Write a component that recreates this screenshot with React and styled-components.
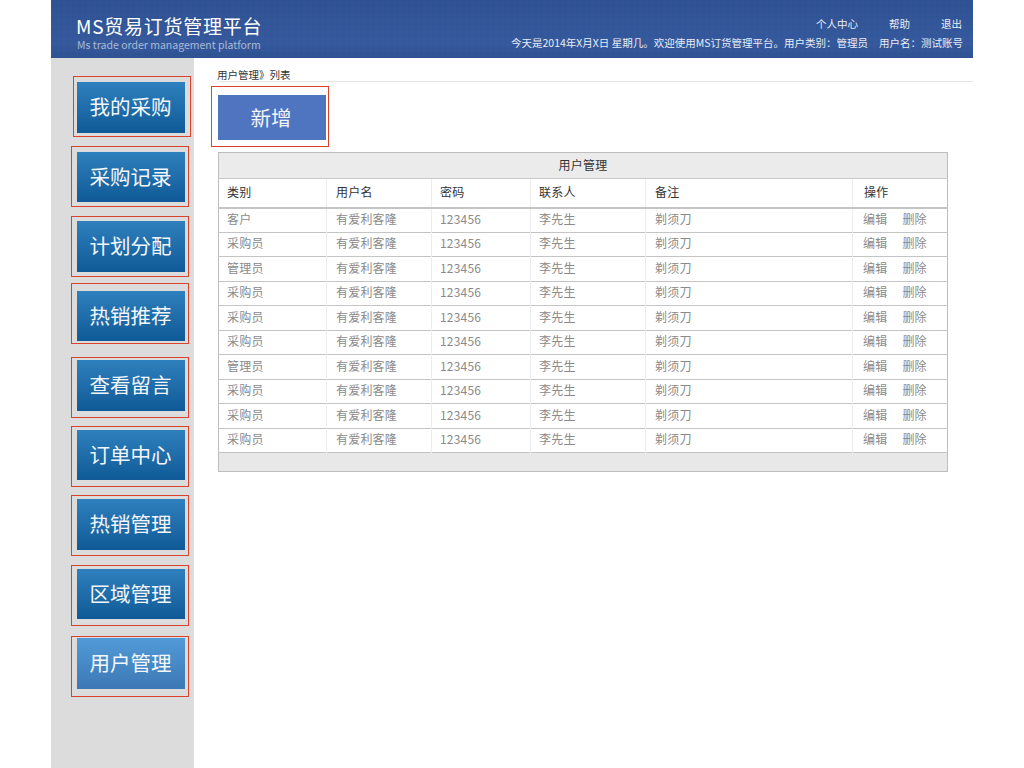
import styled, { createGlobalStyle } from "styled-components";

const menu = [
    { label: "我的采购", frameTop: 6, frameLeft: 4 },
    { label: "采购记录", frameTop: 6, frameLeft: 6 },
    { label: "计划分配", frameTop: 5, frameLeft: 6 },
    { label: "热销推荐", frameTop: 8, frameLeft: 6 },
    { label: "查看留言", frameTop: 3, frameLeft: 6 },
    { label: "订单中心", frameTop: 4, frameLeft: 6 },
    { label: "热销管理", frameTop: 4, frameLeft: 6 },
    { label: "区域管理", frameTop: 4, frameLeft: 6 },
    { label: "用户管理", frameTop: 2, frameLeft: 6, active: true }
];

const users = [
    "客户", "采购员", "管理员", "采购员", "采购员",
    "采购员", "管理员", "采购员", "采购员", "采购员"
];

export default function App() {
    return (
        <>
            <GlobalStyle />
            <Page>
                <Header>
                    <Brand>
                        <h1>MS贸易订货管理平台</h1>
                        <p>Ms trade order management platform</p>
                    </Brand>
                    <HeaderInfo>
                        <TopLinks>
                            <a>个人中心</a>
                            <a>帮助</a>
                            <a>退出</a>
                        </TopLinks>
                        <Welcome>今天是2014年X月X日 星期几。欢迎使用MS订货管理平台。用户类别：管理员<span>用户名：测试账号</span></Welcome>
                    </HeaderInfo>
                </Header>
                <Body>
                    <Sidebar>
                        {menu.map((item) => (
                            <NavButton
                                key={item.label}
                                $active={item.active}
                                $frameTop={item.frameTop}
                                $frameLeft={item.frameLeft}
                            >
                                {item.label}
                            </NavButton>
                        ))}
                    </Sidebar>
                    <Main>
                        <Breadcrumb>用户管理》列表</Breadcrumb>
                        <AddFrame>
                            <AddButton>新增</AddButton>
                        </AddFrame>
                        <UserTable>
                            <colgroup>
                                <col style={{ width: 108 }} />
                                <col style={{ width: 105 }} />
                                <col style={{ width: 99 }} />
                                <col style={{ width: 115 }} />
                                <col style={{ width: 207 }} />
                                <col />
                            </colgroup>
                            <thead>
                                <tr>
                                    <TitleCell colSpan={6}>用户管理</TitleCell>
                                </tr>
                                <HeadRow>
                                    <th>类别</th>
                                    <th>用户名</th>
                                    <th>密码</th>
                                    <th>联系人</th>
                                    <th>备注</th>
                                    <ActionHead>操作</ActionHead>
                                </HeadRow>
                            </thead>
                            <tbody>
                                {users.map((type, i) => (
                                    <DataRow key={i}>
                                        <td>{type}</td>
                                        <td>有爱利客隆</td>
                                        <td>123456</td>
                                        <td>李先生</td>
                                        <td>剃须刀</td>
                                        <ActionCell>
                                            <a>编辑</a>
                                            <a>删除</a>
                                        </ActionCell>
                                    </DataRow>
                                ))}
                            </tbody>
                            <tfoot>
                                <tr>
                                    <FootCell colSpan={6} />
                                </tr>
                            </tfoot>
                        </UserTable>
                    </Main>
                </Body>
            </Page>
        </>
    );
}

const GlobalStyle = createGlobalStyle`
    html, body {
        margin: 0;
        padding: 0;
        height: 768px;
        overflow: hidden;
        background-color: #FFFFFF;
    }

    *, *::before, *::after {
        box-sizing: border-box;
    }

    body {
        font-family: "Noto Sans CJK SC", "Noto Sans", sans-serif;
    }
`;

const Page = styled.div`
    width: 922px;
    height: 768px;
    margin-left: 51px;
    display: flex;
    flex-direction: column;
`;

const Header = styled.header`
    height: 58px;
    padding: 0 10px 0 25px;
    display: flex;
    justify-content: space-between;
    color: #FFFFFF;
    background-color: #2F5191;
    background-image:
        repeating-linear-gradient(0deg, rgba(255, 255, 255, 0.008) 0 3px, transparent 3px 6px),
        repeating-linear-gradient(90deg, rgba(255, 255, 255, 0.008) 0 3px, transparent 3px 6px),
        linear-gradient(180deg, #2D5192 0%, #34589C 75%, #2D5090 100%);
`;

const Brand = styled.div`
    padding-top: 13px;

    h1 {
        margin: 0;
        font-size: 19px;
        line-height: 26px;
        font-weight: 400;
        letter-spacing: 0.75px;
    }

    p {
        margin: -1px 0 0 1px;
        font-size: 10.5px;
        line-height: 13px;
        color: #A9B9D6;
    }
`;

const HeaderInfo = styled.div`
    padding-top: 16px;
    display: flex;
    flex-direction: column;
    align-items: flex-end;
    font-size: 10.5px;
    line-height: 16px;
    color: #E8EDF6;
`;

const TopLinks = styled.div`
    display: flex;
    gap: 31px;
    margin: 0 1px 3px 0;
`;

const Welcome = styled.div`
    white-space: nowrap;

    span {
        margin-left: 11px;
    }
`;

const Body = styled.div`
    flex: 1;
    display: flex;
`;

const Sidebar = styled.nav`
    width: 143px;
    padding: 24px 0 0 26px;
    display: flex;
    flex-direction: column;
    gap: 19px;
    background-color: #DCDCDC;
`;

const NavButton = styled.div`
    position: relative;
    width: 108px;
    height: 50.5px;
    padding: 0 1px 2px 0;
    display: flex;
    align-items: center;
    justify-content: center;
    font-size: 20.5px;
    color: #F2F6FA;
    background: ${(props) => props.$active
        ? "linear-gradient(180deg, #519BD8 0%, #3C78B4 100%)"
        : "linear-gradient(180deg, #2F80BE 0%, #0F5A96 100%)"};

    &::after {
        content: "";
        position: absolute;
        top: -${(props) => props.$frameTop}px;
        left: -${(props) => props.$frameLeft}px;
        width: 118px;
        height: 61px;
        border: 1px solid #D9432B;
    }
`;

const Main = styled.main`
    flex: 1;
    padding-left: 24px;
`;

const Breadcrumb = styled.div`
    height: 24px;
    padding-top: 10px;
    font-size: 10.5px;
    line-height: 14px;
    text-indent: -1px;
    color: #333333;
    border-bottom: 1px solid #E4E4E4;
`;

const AddFrame = styled.div`
    width: 118px;
    height: 61px;
    margin: 4px 0 5px -7px;
    padding: 8px 0 0 6px;
    border: 1px solid #D9432B;
`;

const AddButton = styled.div`
    width: 108px;
    height: 45px;
    padding: 0 2px 2px 0;
    display: flex;
    align-items: center;
    justify-content: center;
    font-size: 20.5px;
    color: #F2F6FA;
    background-color: #4F74C0;
`;

const UserTable = styled.table`
    width: 730px;
    table-layout: fixed;
    border-collapse: collapse;
    font-size: 12px;
    letter-spacing: 0.2px;
    border: 1px solid #BDBDBD;

    th, td {
        padding: 0 0 2px 9px;
        font-weight: 400;
        text-align: left;
    }

    th:nth-child(1), td:nth-child(1), th:nth-child(3), td:nth-child(3), th:nth-child(4), td:nth-child(4) {
        padding-left: 8px;
    }
`;

const TitleCell = styled.th`
    &&& {
        height: 26px;
        padding: 0 0 2px;
        text-align: center;
        color: #333333;
        background-color: #EBEBEB;
        border-bottom: 1px solid #C8C8C8;
    }
`;

const HeadRow = styled.tr`
    height: 29px;
    color: #333333;
    border-bottom: 2px solid #C4C4C4;

    th + th {
        border-left: 1px solid #EDEDED;
    }
`;

const ActionHead = styled.th`
    && {
        padding-left: 11px;
    }
`;

const DataRow = styled.tr`
    height: 24.5px;
    color: #8A8A8A;
    border-bottom: 1px solid #C4C4C4;

    td + td {
        border-left: 1px solid #EDEDED;
    }

    td {
        padding-bottom: 3px;
    }
`;

const ActionCell = styled.td`
    && {
        padding-left: 10px;
    }

    a + a {
        margin-left: 15px;
    }
`;

const FootCell = styled.td`
    height: 19px;
    background-color: #E8E8E8;
`;
